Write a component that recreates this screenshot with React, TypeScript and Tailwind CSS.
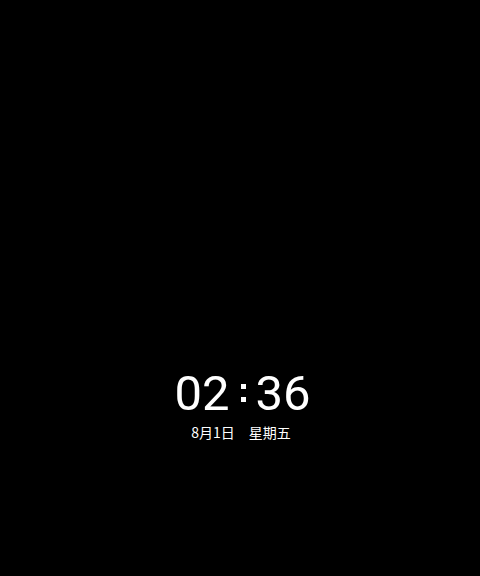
export default function App() {
  return (
    <div className="flex h-[576px] w-[480px] flex-col items-center bg-black pt-[369px] text-white">
      <div className="flex pl-[5px] font-['Roboto',sans-serif] text-[49px] leading-none">
        <span>02</span>
        <span className="ml-[11px] mr-[10px] flex h-[49px] flex-col gap-[8px] pt-[15px]">
          <span className="h-[5px] w-[5px] bg-white" />
          <span className="h-[5px] w-[5px] bg-white" />
        </span>
        <span>36</span>
      </div>
      <div className="mt-[7px] flex pl-[2px] font-['Noto_Sans_CJK_SC','Noto_Sans',sans-serif] text-[14px] leading-[14px]">
        <span>8月1日</span>
        <span className="ml-[14px]">星期五</span>
      </div>
    </div>
  )
}
